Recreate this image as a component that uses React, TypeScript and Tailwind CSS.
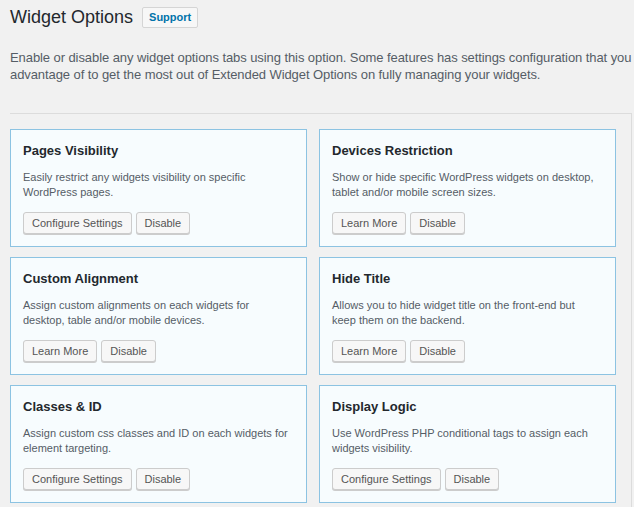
import React from "react";

type Card = { title: string; desc: string; primary: string };

const cards: Card[] = [
  { title: "Pages Visibility", desc: "Easily restrict any widgets visibility on specific WordPress pages.", primary: "Configure Settings" },
  { title: "Devices Restriction", desc: "Show or hide specific WordPress widgets on desktop, tablet and/or mobile screen sizes.", primary: "Learn More" },
  { title: "Custom Alignment", desc: "Assign custom alignments on each widgets for desktop, table and/or mobile devices.", primary: "Learn More" },
  { title: "Hide Title", desc: "Allows you to hide widget title on the front-end but keep them on the backend.", primary: "Learn More" },
  { title: "Classes & ID", desc: "Assign custom css classes and ID on each widgets for element targeting.", primary: "Configure Settings" },
  { title: "Display Logic", desc: "Use WordPress PHP conditional tags to assign each widgets visibility.", primary: "Configure Settings" },
];

function Btn({ children }: { children: React.ReactNode }) {
  return (
    <button className="h-[22px] px-[8px] rounded-[3px] border border-[#cccccc] bg-[#f7f7f7] shadow-[0_1px_0_#cccccc] text-[11px] leading-[20px] text-[#555555] whitespace-nowrap">
      {children}
    </button>
  );
}

export default function App() {
  return (
    <div
      className="w-[634px] h-[507px] overflow-hidden bg-[#f1f1f1]"
      style={{ fontFamily: '"Liberation Sans", Arial, sans-serif' }}
    >
      <div className="pl-[10px] pt-[7px] flex items-center h-[28px]">
        <h1 className="text-[18px] leading-[21px] font-normal text-[#23282d]">Widget Options</h1>
        <span className="ml-[9px] h-[21px] px-[6px] flex items-center rounded-[2px] border border-[#d5d5d5] bg-[#f7f7f7] text-[11px] font-bold text-[#0073aa]">
          Support
        </span>
      </div>
      <p className="mt-[21px] pl-[10px] text-[13px] leading-[17px] tracking-[-0.08px] text-[#555d66] whitespace-nowrap">
        Enable or disable any widget options tabs using this option. Some features has settings configuration that you
        <br />
        advantage of to get the most out of Extended Widget Options on fully managing your widgets.
      </p>
      <div className="mt-[30px] ml-[10px] w-[622px] h-[400px] border-t border-r border-[#dcdcdc] pt-[15px]">
        <div className="grid grid-cols-[297px_297px] gap-x-[12px] gap-y-[10px]">
          {cards.map((c) => (
            <div
              key={c.title}
              className="h-[118px] border border-[#8cc3e2] bg-[#f7fcfe] px-[12px] pt-[12px]"
            >
              <h3 className="text-[13px] leading-[18px] font-bold text-[#23282d]">{c.title}</h3>
              <p className="mt-[10px] max-w-[265px] text-[11px] leading-[15px] text-[#555d66]">{c.desc}</p>
              <div className="mt-[12px] flex gap-[4px]">
                <Btn>{c.primary}</Btn>
                <Btn>Disable</Btn>
              </div>
            </div>
          ))}
        </div>
      </div>
    </div>
  );
}
